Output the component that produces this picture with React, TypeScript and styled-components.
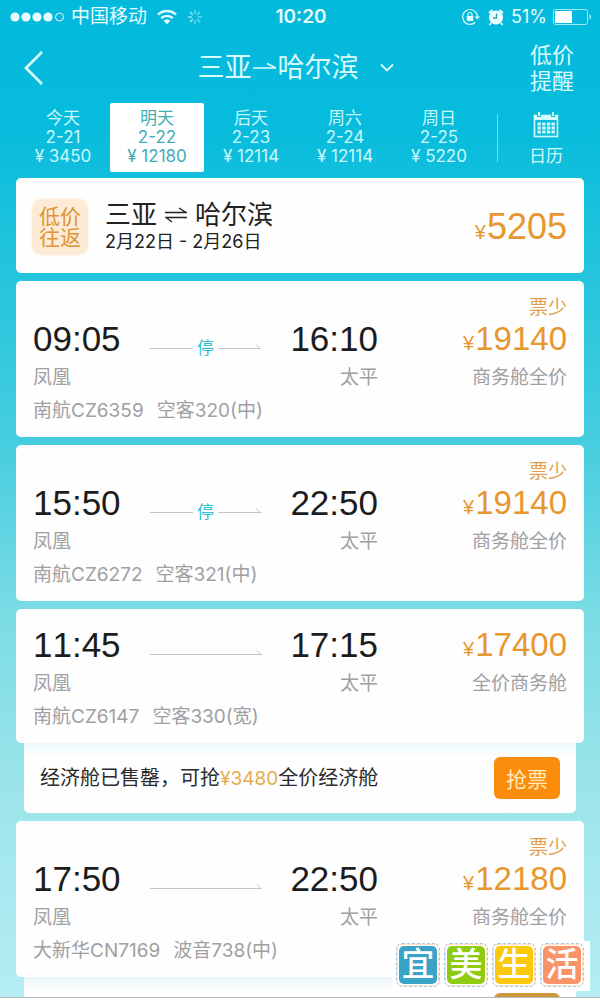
import React from "react";
import styled, { createGlobalStyle } from "styled-components";

const Global = createGlobalStyle`
  * { box-sizing: border-box; }
  body {
    margin: 0;
    background: #fff;
    font-family: Inter, "Noto Sans CJK SC", sans-serif;
    -webkit-font-smoothing: antialiased;
  }
  button { font-family: inherit; border: 0; padding: 0; background: none; color: inherit; cursor: pointer; }
  p, h1, h2 { margin: 0; font-weight: 400; }
  svg { display: block; flex: none; }
`;

const Screen = styled.div`
  position: relative;
  display: flex;
  flex-direction: column;
  height: 100vh;
  overflow: hidden;
  padding-bottom: 3px;
`;

const Page = styled.div`
  flex: 1;
  min-height: 0;
  overflow: hidden;
  border-bottom: 1px solid #b4bcbd;
  background: linear-gradient(#03b9dc 0, #06bbdc 12%, #1ec3dc 24%, #45cddf 44%, #7bdce5 62%, #9de5ea 80%, #b5edf4 100%);
`;

const StatusBar = styled.div`
  display: grid;
  grid-template-columns: 1fr auto 1fr;
  align-items: center;
  height: 33px;
  padding: 0 8px 0 10px;
  color: #e6fcff;
  font-size: 18px;
  line-height: 24px;
`;

const StatusGroup = styled.div<{ $end?: boolean }>`
  display: flex;
  align-items: center;
  gap: ${(p) => (p.$end ? 6 : 10)}px;
  justify-content: ${(p) => (p.$end ? "flex-end" : "flex-start")};
`;

const Carrier = styled.span`
  display: flex;
  align-items: center;
  gap: 7px;
  font-size: 19px;
`;

const Clock = styled.span`
  font-size: 19px;
  font-weight: 600;
`;

const Header = styled.header`
  display: grid;
  grid-template-columns: 1fr auto 1fr;
  align-items: center;
  height: 70px;
  padding: 0 26px 0 23px;
  color: #dcfbff;
`;

const BackButton = styled.button`
  justify-self: start;
`;

const TitleButton = styled.button`
  display: flex;
  align-items: center;
  margin-right: 5px;
  font-size: 27px;
  line-height: 36px;
`;

const Chevron = styled.svg`
  margin-left: 20px;
`;

const AlertButton = styled.button`
  justify-self: end;
  width: 44px;
  font-size: 22px;
  line-height: 26px;
`;

const DateBar = styled.nav`
  display: flex;
  align-items: center;
  height: 69px;
  margin-bottom: 6px;
  padding: 0 16px;
`;

const DateTab = styled.button<{ $active?: boolean }>`
  flex: 94 1 0;
  align-self: stretch;
  display: flex;
  flex-direction: column;
  align-items: center;
  justify-content: center;
  border-radius: 2px;
  font-size: 17px;
  line-height: 19px;
  white-space: nowrap;
  color: ${(p) => (p.$active ? "#43adb5" : "#c9f8fc")};
  background: ${(p) => (p.$active ? "#fff" : "transparent")};
`;

const DateDivider = styled.span`
  width: 1px;
  height: 48px;
  margin: 0 10px 0 11px;
  background: #74dbe9;
`;

const CalendarButton = styled.button`
  flex: 76 1 0;
  display: flex;
  flex-direction: column;
  align-items: center;
  gap: 8px;
  padding-top: 2px;
  font-size: 17px;
  line-height: 20px;
  color: #d3fafd;
`;

const List = styled.main`
  display: flex;
  flex-direction: column;
  gap: 8px;
  padding: 0 16px;
`;

const Card = styled.section`
  border-radius: 5px;
  background: #fefefe;
`;

const RoundTrip = styled(Card)`
  display: flex;
  align-items: center;
  height: 95px;
  padding: 2px 17px 0 16px;
`;

const DealBadge = styled.span`
  width: 56px;
  padding: 7px 0;
  border-radius: 10px;
  background: #fdebd6;
  color: #dd9538;
  font-size: 21px;
  line-height: 21px;
  text-align: center;
  box-shadow: 0 0 3px #fdebd6;
`;

const TripInfo = styled.div`
  flex: 1;
  padding-left: 17px;
  color: #222;
`;

const TripRoute = styled.h2`
  display: flex;
  align-items: center;
  gap: 8px;
  font-size: 26px;
  line-height: 30px;
`;

const TripDates = styled.p`
  font-size: 18px;
  line-height: 24px;
`;

const Price = styled.span<{ $large?: boolean }>`
  display: flex;
  align-items: baseline;
  justify-content: flex-end;
  gap: 1px;
  height: 36px;
  color: #e7972f;
  font-family: "Liberation Sans", sans-serif;
  font-size: ${(p) => (p.$large ? 36 : 33)}px;
  line-height: 36px;
  font-kerning: none;
  white-space: nowrap;
`;

const Yen = styled.span`
  font-size: 20px;
`;

const Flight = styled(Card)<{ $tagged?: boolean }>`
  padding: ${(p) => (p.$tagged ? 16 : 18)}px 17px 14px;
`;

const Tag = styled.p`
  margin-bottom: 2px;
  color: #e0a04c;
  font-size: 19px;
  line-height: 22px;
  text-align: right;
`;

const FlightRow = styled.div`
  display: grid;
  grid-template-columns: minmax(0, 345fr) minmax(0, 189fr);
`;

const Between = styled.div`
  display: flex;
  justify-content: space-between;
`;

const Time = styled.span`
  font-family: "Liberation Sans", sans-serif;
  font-size: 35px;
  line-height: 36px;
  font-kerning: none;
  color: #1c1c1c;
`;

const Path = styled.span`
  display: flex;
  align-items: center;
  gap: 4px;
  height: 20px;
  margin-top: 17px;
  color: #2fbfd2;
  font-size: 17px;
  line-height: 20px;
`;

const Airports = styled(FlightRow)`
  margin-top: 8px;
  color: #a0a0a3;
  font-size: 19px;
  line-height: 24px;
`;

const Cabin = styled.span`
  text-align: right;
`;

const Plane = styled.div`
  display: flex;
  gap: 13px;
  margin-top: 9px;
  color: #a0a0a3;
  font-size: 19px;
  line-height: 24px;
`;

const Offer = styled.div`
  display: flex;
  align-items: center;
  justify-content: space-between;
  height: 70px;
  margin: -8px 8px 0;
  padding: 0 16px;
  border-radius: 0 0 5px 5px;
  background: linear-gradient(#e9f8fd 0, #fefefe 14px);
  color: #2b2b2b;
  font-size: 20px;
  line-height: 28px;
`;

const OfferPrice = styled.span`
  color: #e5ac4c;
  font-size: 19px;
`;

const GrabButton = styled.button`
  width: 66px;
  height: 42px;
  border-radius: 6px;
  background: #fb8c0c;
  color: #ffeab8;
  font-size: 21px;
`;

const NextOffer = styled(Offer)`
  align-items: flex-start;
  justify-content: flex-end;
  padding-top: 16px;

  ${GrabButton} {
    background: #cc963e;
  }
`;

const Watermark = styled.div`
  position: absolute;
  right: 10px;
  bottom: 10px;
  display: flex;
  gap: 4px;
  padding: 2px 6px 4px 4px;
  background: #fff;
`;

const Frame = styled.span`
  padding: 2px;
  border: 1px dashed #a9c7de;
  border-radius: 6px;
  outline: 1px dotted #f0c8a4;
  outline-offset: -2px;
`;

const Tile = styled.span<{ $color: string }>`
  display: block;
  width: 38px;
  height: 38px;
  border-radius: 5px;
  background: ${(p) => p.$color};
  color: #fff;
  font-size: 33px;
  line-height: 37px;
  font-weight: 500;
  text-align: center;
`;

const dates = [
  { day: "今天", date: "2-21", price: "3450" },
  { day: "明天", date: "2-22", price: "12180", active: true },
  { day: "后天", date: "2-23", price: "12114" },
  { day: "周六", date: "2-24", price: "12114" },
  { day: "周日", date: "2-25", price: "5220" },
];

type FlightData = {
  tag?: string;
  depart: string;
  arrive: string;
  stop?: boolean;
  price: string;
  cabin: string;
  number: string;
  plane: string;
};

const flights: FlightData[] = [
  { tag: "票少", depart: "09:05", arrive: "16:10", stop: true, price: "19140", cabin: "商务舱全价", number: "南航CZ6359", plane: "空客320(中)" },
  { tag: "票少", depart: "15:50", arrive: "22:50", stop: true, price: "19140", cabin: "商务舱全价", number: "南航CZ6272", plane: "空客321(中)" },
  { depart: "11:45", arrive: "17:15", price: "17400", cabin: "全价商务舱", number: "南航CZ6147", plane: "空客330(宽)" },
  { tag: "票少", depart: "17:50", arrive: "22:50", price: "12180", cabin: "商务舱全价", number: "大新华CN7169", plane: "波音738(中)" },
];

const tiles = [
  { char: "宜", color: "#3aa3c8" },
  { char: "美", color: "#8fcb12" },
  { char: "生", color: "#fcc80c" },
  { char: "活", color: "#f99468" },
];

function Line({ width, head }: { width: number; head?: boolean }) {
  return (
    <svg width={width} height="12" fill="none" stroke="#c4c4c4">
      <path d={`M0 6.5H${width}`} />
      {head && <path d={`M${width - 5} 2.5L${width - 1} 6.5`} />}
    </svg>
  );
}

function FlightCard({ flight }: { flight: FlightData }) {
  return (
    <Flight $tagged={!!flight.tag}>
      {flight.tag && <Tag>{flight.tag}</Tag>}
      <FlightRow>
        <Between>
          <Time>{flight.depart}</Time>
          <Path>
            {flight.stop ? (
              <>
                <Line width={43} />
                停
                <Line width={43} head />
              </>
            ) : (
              <Line width={112} head />
            )}
          </Path>
          <Time>{flight.arrive}</Time>
        </Between>
        <Price>
          <Yen>¥</Yen>
          {flight.price}
        </Price>
      </FlightRow>
      <Airports>
        <Between>
          <span>凤凰</span>
          <span>太平</span>
        </Between>
        <Cabin>{flight.cabin}</Cabin>
      </Airports>
      <Plane>
        <span>{flight.number}</span>
        <span>{flight.plane}</span>
      </Plane>
    </Flight>
  );
}

function SoldOutOffer() {
  return (
    <Offer>
      <p>
        经济舱已售罄，可抢<OfferPrice>¥3480</OfferPrice>全价经济舱
      </p>
      <GrabButton>抢票</GrabButton>
    </Offer>
  );
}

export default function App() {
  return (
    <Screen>
      <Global />
      <Page>
        <StatusBar>
          <StatusGroup>
            <Carrier>
              <svg width="54" height="12" fill="currentColor">
                {[5, 16, 27, 38].map((x) => (
                  <circle key={x} cx={x} cy="6" r="4.6" />
                ))}
                <circle cx="49.5" cy="6" r="4" fill="none" stroke="currentColor" />
              </svg>
              中国移动
            </Carrier>
            <svg width="20" height="16" viewBox="0 0 20 16" fill="none" stroke="currentColor" strokeWidth="2.4">
              <path d="M1 5.6a13 13 0 0 1 18 0M4.2 9.2a8.3 8.3 0 0 1 11.6 0" />
              <path d="M10 15.2L6.6 11.8a5 5 0 0 1 6.8 0z" fill="currentColor" stroke="none" />
            </svg>
            <svg width="16" height="16" viewBox="0 0 16 16" stroke="#8ee6f1" strokeWidth="1.5">
              {[0, 45, 90, 135, 180, 225, 270, 315].map((a) => (
                <path key={a} d="M8 1v4" transform={`rotate(${a} 8 8)`} opacity={a > 200 ? 1 : 0.7} />
              ))}
            </svg>
          </StatusGroup>
          <Clock>10:20</Clock>
          <StatusGroup $end>
            <svg width="20" height="18" viewBox="0 0 20 18" fill="none" stroke="currentColor" strokeWidth="1.2">
              <path d="M14.2 14.2A7.4 7.4 0 1 1 16.4 9" />
              <path d="M13.5 8.5h5.6l-2.8 3z" fill="currentColor" stroke="none" />
              <rect x="5.8" y="8" width="6.4" height="5" fill="currentColor" stroke="none" />
              <path d="M7 8V6.5a2 2 0 0 1 4 0V8" />
            </svg>
            <svg width="18" height="18" viewBox="0 0 18 18">
              <circle cx="9" cy="9.5" r="7" fill="#eefdff" />
              <path d="M2 5l3.5-3M16 5l-3.5-3M4 15l-1.5 2M14 15l1.5 2" stroke="#eefdff" strokeWidth="1.8" />
              <path d="M9.5 5.5V10H6" fill="none" stroke="#2f9fb5" strokeWidth="1.4" />
            </svg>
            <span>51%</span>
            <svg width="39" height="16" viewBox="0 0 39 16">
              <rect x="0.5" y="0.5" width="34" height="15" rx="2" fill="none" stroke="#9eeaf3" />
              <rect x="2" y="2" width="17" height="12" fill="#fff" />
              <path d="M36.5 5v6a3.5 3.5 0 0 0 0-6" fill="#9eeaf3" />
            </svg>
          </StatusGroup>
        </StatusBar>

        <Header>
          <BackButton aria-label="返回">
            <svg width="22" height="36" fill="none" stroke="currentColor" strokeWidth="2.6">
              <path d="M19 2L3 18L19 34" />
            </svg>
          </BackButton>
          <TitleButton>
            三亚
            <svg width="26" height="16" fill="none" stroke="currentColor" strokeWidth="1.6">
              <path d="M1 8H24L15 3.500" />
            </svg>
            哈尔滨
            <Chevron width="16" height="10" fill="none" stroke="currentColor" strokeWidth="1.8">
              <path d="M2 1.5L8 7.5L14 1.5" />
            </Chevron>
          </TitleButton>
          <AlertButton>低价提醒</AlertButton>
        </Header>

        <DateBar>
          {dates.map((d) => (
            <DateTab key={d.date} $active={d.active}>
              <span>{d.day}</span>
              <span>{d.date}</span>
              <span>¥ {d.price}</span>
            </DateTab>
          ))}
          <DateDivider />
          <CalendarButton>
            <svg width="26" height="26" viewBox="0 0 26 26">
              <rect x="1.5" y="3.5" width="23" height="21" fill="none" stroke="currentColor" strokeWidth="1.6" />
              <path d="M1 3h24v5H1z" fill="currentColor" />
              <path d="M6 0v5M20 0v5" stroke="#08bcdb" strokeWidth="4" />
              <path d="M6 0v4M20 0v4" stroke="currentColor" strokeWidth="2" />
              {[10.5, 14.5, 18.5].map((y) =>
                [4.5, 9.2, 13.9, 18.5].map((x) => (
                  <rect key={`${x}-${y}`} x={x} y={y} width="3.4" height="3" fill="currentColor" />
                ))
              )}
            </svg>
            日历
          </CalendarButton>
        </DateBar>

        <List>
          <RoundTrip>
            <DealBadge>低价往返</DealBadge>
            <TripInfo>
              <TripRoute>
                三亚
                <svg width="22" height="18" fill="none" stroke="currentColor" strokeWidth="1.3">
                  <path d="M0 6.5H21L14 2M22 11.5H1L7 16" />
                </svg>
                哈尔滨
              </TripRoute>
              <TripDates>2月22日 - 2月26日</TripDates>
            </TripInfo>
            <Price $large>
              <Yen>¥</Yen>5205
            </Price>
          </RoundTrip>
          <FlightCard flight={flights[0]} />
          <FlightCard flight={flights[1]} />
          <FlightCard flight={flights[2]} />
          <SoldOutOffer />
          <FlightCard flight={flights[3]} />
          <NextOffer>
            <GrabButton aria-label="抢票" />
          </NextOffer>
        </List>
      </Page>
      <Watermark>
        {tiles.map((t) => (
          <Frame key={t.char}>
            <Tile $color={t.color}>{t.char}</Tile>
          </Frame>
        ))}
      </Watermark>
    </Screen>
  );
}
